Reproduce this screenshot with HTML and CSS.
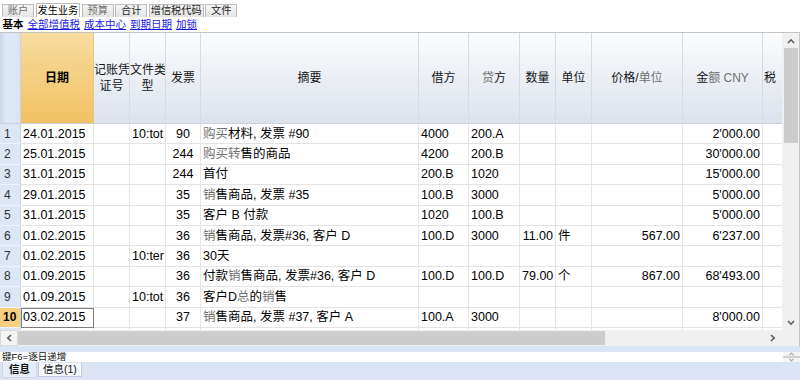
FILE: index.html
```html
<!DOCTYPE html>
<html lang="zh-CN">
<head>
    <meta charset="UTF-8">
    <title>发生业务</title>
    <link rel="stylesheet" href="styles.css">
</head>
<body>
    <div class="tabs">
        <span class="tab lt">账户</span>
        <span class="tab active">发生业务</span>
        <span class="tab lt">预算</span>
        <span class="tab">合计</span>
        <span class="tab">增信税代码</span>
        <span class="tab">文件</span>
    </div>
    <div class="views">
        <b>基本</b>
        <a href="#">全部增值税</a>
        <a href="#">成本中心</a>
        <a href="#">到期日期</a>
        <a href="#">加锁</a>
    </div>

    <div class="frame">
        <div class="grid-area">
            <div class="viewport">
                <table class="journal">
                    <colgroup>
                        <col class="w-rn"><col class="w-date"><col class="w-vch"><col class="w-type">
                        <col class="w-inv"><col class="w-desc"><col class="w-deb"><col class="w-cre">
                        <col class="w-qty"><col class="w-unit"><col class="w-price"><col class="w-amt">
                        <col class="w-tax">
                    </colgroup>
                    <thead>
                        <tr>
                            <th class="rn"></th>
                            <th class="date">日期</th>
                            <th class="lt">记账凭<br>证号</th>
                            <th>文件类<br>型</th>
                            <th class="lt">发票</th>
                            <th>摘要</th>
                            <th>借方</th>
                            <th><span class="lt">贷</span>方</th>
                            <th>数量</th>
                            <th class="lt">单位</th>
                            <th>价格/<span class="lt">单位</span></th>
                            <th>金<span class="lt">额 CNY</span></th>
                            <th class="tax">税</th>
                        </tr>
                    </thead>
                    <tbody>
                        <tr><td class="rn">1</td><td>24.01.2015</td><td></td><td>10:tot</td><td class="c">90</td><td><span class="lt">购买</span>材料, 发票 #90</td><td>4000</td><td>200.A</td><td></td><td></td><td></td><td class="r">2'000.00</td><td></td></tr>
                        <tr><td class="rn">2</td><td>25.01.2015</td><td></td><td></td><td class="c">244</td><td><span class="lt">购买转</span>售的商品</td><td>4200</td><td>200.B</td><td></td><td></td><td></td><td class="r">30'000.00</td><td></td></tr>
                        <tr><td class="rn">3</td><td>31.01.2015</td><td></td><td></td><td class="c">244</td><td>首付</td><td>200.B</td><td>1020</td><td></td><td></td><td></td><td class="r">15'000.00</td><td></td></tr>
                        <tr><td class="rn">4</td><td>29.01.2015</td><td></td><td></td><td class="c">35</td><td><span class="lt">销</span>售商品, 发票 #35</td><td>100.B</td><td>3000</td><td></td><td></td><td></td><td class="r">5'000.00</td><td></td></tr>
                        <tr><td class="rn">5</td><td>31.01.2015</td><td></td><td></td><td class="c">35</td><td>客户 B 付款</td><td>1020</td><td>100.B</td><td></td><td></td><td></td><td class="r">5'000.00</td><td></td></tr>
                        <tr><td class="rn">6</td><td>01.02.2015</td><td></td><td></td><td class="c">36</td><td><span class="lt">销</span>售商品, 发票#36, 客户 D</td><td>100.D</td><td>3000</td><td class="r">11.00</td><td>件</td><td class="r">567.00</td><td class="r">6'237.00</td><td></td></tr>
                        <tr><td class="rn">7</td><td>01.02.2015</td><td></td><td>10:ter</td><td class="c">36</td><td>30天</td><td></td><td></td><td></td><td></td><td></td><td></td><td></td></tr>
                        <tr><td class="rn">8</td><td>01.09.2015</td><td></td><td></td><td class="c">36</td><td>付款<span class="lt">销</span>售商品, 发票#36, 客户 D</td><td>100.D</td><td>100.D</td><td class="r">79.00</td><td>个</td><td class="r">867.00</td><td class="r">68'493.00</td><td></td></tr>
                        <tr><td class="rn">9</td><td>01.09.2015</td><td></td><td>10:tot</td><td class="c">36</td><td>客户D<span class="lt">总</span>的<span class="lt">销</span>售</td><td></td><td></td><td></td><td></td><td></td><td></td><td></td></tr>
                        <tr class="current"><td class="rn">10</td><td class="cur">03.02.2015</td><td></td><td></td><td class="c">37</td><td><span class="lt">销</span>售商品, 发票 #37, 客户 A</td><td>100.A</td><td>3000</td><td></td><td></td><td></td><td class="r">8'000.00</td><td></td></tr>
                        <tr><td class="rn"></td><td></td><td></td><td></td><td></td><td></td><td></td><td></td><td></td><td></td><td></td><td></td><td></td></tr>
                    </tbody>
                </table>
            </div>
            <div class="vscroll">
                <div class="arrow">
                    <svg width="8" height="6" viewBox="0 0 8 6"><polyline points="1,5 4,1.8 7,5" fill="none" stroke="#5a5a5a" stroke-width="1.6"/></svg>
                </div>
                <div class="thumb"></div>
                <div class="spacer"></div>
                <div class="arrow">
                    <svg width="8" height="6" viewBox="0 0 8 6"><polyline points="1,1 4,4.2 7,1" fill="none" stroke="#5a5a5a" stroke-width="1.6"/></svg>
                </div>
            </div>
        </div>
        <div class="hscroll">
            <div class="btn left">
                <svg width="6" height="8" viewBox="0 0 6 8"><polyline points="5,1 1.8,4 5,7" fill="none" stroke="#5a5a5a" stroke-width="1.6"/></svg>
            </div>
            <div class="thumb"></div>
            <div class="track"></div>
            <div class="btn">
                <svg width="6" height="8" viewBox="0 0 6 8"><polyline points="1,1 4.2,4 1,7" fill="none" stroke="#5a5a5a" stroke-width="1.6"/></svg>
            </div>
            <div class="corner"></div>
        </div>
    </div>

    <div class="bottom">
        <div class="status">
            <div class="msg">键F6=逐日递增</div>
            <div class="spin">
                <svg width="17" height="10" viewBox="0 0 17 10">
                    <polyline points="6.5,3 8.5,1.2 10.5,3" fill="none" stroke="#666" stroke-width="0.9"/>
                    <line x1="0" y1="5" x2="17" y2="5" stroke="#b0b0b0" stroke-width="1"/>
                    <polyline points="6.5,7 8.5,8.8 10.5,7" fill="none" stroke="#666" stroke-width="0.9"/>
                </svg>
            </div>
        </div>
        <div class="btabs">
            <span class="btab active">信息</span>
            <span class="btab">信息(1)</span>
        </div>
    </div>
</body>
</html>
```

FILE: styles.css
```css
* {
    box-sizing: border-box;
}
body {
    margin: 0;
    width: 800px;
    height: 380px;
    overflow: hidden;
    font-family: "Liberation Sans", "Noto Sans CJK SC", sans-serif;
    font-size: 12px;
    color: #000;
    background: #fff;
}
.lt {
    color: #707070;
}

/* top tabs */
.tabs {
    display: flex;
    align-items: flex-end;
    gap: 1.5px;
    height: 17px;
    padding-left: 2px;
}
.tab {
    min-width: 32px;
    height: 13px;
    padding: 0 1px;
    border: 1px solid #bcbcbc;
    border-bottom: none;
    background: linear-gradient(#f6f6f6, #e4e4e4);
    font-size: 10.2px;
    line-height: 12px;
    text-align: center;
    color: #222;
}
.tab.lt {
    color: #707070;
}
.tab.active {
    height: 14px;
    background: #fff;
    color: #000;
    line-height: 13px;
}

/* view links */
.views {
    display: flex;
    gap: 4px;
    height: 15px;
    padding-left: 2.5px;
    font-size: 10.5px;
    line-height: 15px;
}
.views a {
    color: #1a1ae6;
    text-decoration: underline;
}

/* grid frame */
.frame {
    border-top: 1px solid #c4c4c4;
    border-right: 1px solid #c4c4c4;
}
.grid-area {
    display: flex;
    height: 297px;
}
.viewport {
    width: 782px;
    overflow: hidden;
}

.journal {
    border-collapse: separate;
    border-spacing: 0;
    table-layout: fixed;
    width: 793px;
    font-size: 12.5px;
}
.w-rn { width: 21px; }
.w-date { width: 73px; }
.w-vch { width: 36px; }
.w-type { width: 36px; }
.w-inv { width: 35px; }
.w-desc { width: 218px; }
.w-deb { width: 50px; }
.w-cre { width: 51px; }
.w-qty { width: 36px; }
.w-unit { width: 36px; }
.w-price { width: 91px; }
.w-amt { width: 80px; }
.w-tax { width: 30px; }

.journal th {
    height: 91px;
    padding: 0;
    font-weight: normal;
    font-size: 12px;
    line-height: 16.5px;
    color: #151515;
    text-align: center;
    vertical-align: middle;
    white-space: nowrap;
    overflow: hidden;
    background: linear-gradient(#fbfcfd, #dce2ec);
    border-right: 1px solid #d5dbe4;
    border-bottom: 1px solid #cad1dc;
}
.journal th.rn {
    background: linear-gradient(to right, #c9d6ea, #dfe8f6 30%, #dae4f3);
    border-right: 1px solid #c8d3e4;
}
.journal th.date {
    font-weight: bold;
    color: #000;
    background: linear-gradient(#f8dc9f, #f1c163);
    border-right-color: #e9c57e;
}
.journal th.tax {
    text-align: left;
    padding-left: 1px;
    border-right: none;
}

.journal tbody tr {
    height: 20.4px;
}
.journal td {
    padding: 0 2px;
    line-height: 14px;
    white-space: nowrap;
    overflow: hidden;
    border-right: 1px solid #e4e6ea;
    border-bottom: 1px solid #e3e3e3;
}
.journal td.c {
    text-align: center;
}
.journal td.r {
    text-align: right;
}
.journal td.rn {
    padding-left: 4px;
    font-size: 12px;
    color: #333;
    background: #dde6f4;
    border-right: 1px solid #c8d3e4;
    border-bottom: 1px solid #eef2f9;
}
.current td.rn {
    padding-left: 3px;
    font-weight: bold;
    color: #000;
    background: #f6cf80;
}
.journal td.cur {
    outline: 1px solid #7d7d7d;
    outline-offset: -1px;
}

/* scrollbars */
.vscroll {
    display: flex;
    flex-direction: column;
    align-items: center;
    width: 17px;
    background: #f0f0f0;
}
.vscroll .arrow {
    display: flex;
    align-items: center;
    justify-content: center;
    width: 100%;
    height: 15px;
}
.vscroll .thumb {
    width: 14px;
    height: 95px;
    background: #cdcdcd;
}
.vscroll .spacer {
    flex: 1;
}
.hscroll {
    display: flex;
    height: 16px;
    background: #f0f0f0;
}
.hscroll .btn {
    display: flex;
    align-items: center;
    justify-content: center;
    width: 18px;
}
.hscroll .btn.left {
    background: #f5f5f5;
    border: 1px solid #dadada;
}
.hscroll .thumb {
    width: 587px;
    margin: 1px 0;
    background: #cdcdcd;
}
.hscroll .track {
    flex: 1;
}
.hscroll .corner {
    width: 17px;
}

/* bottom */
.bottom {
    height: 34px;
    padding-top: 6px;
    background: #dae4f5;
}
.status {
    display: flex;
    height: 10px;
    background: #fff;
}
.status .msg {
    flex: 1;
    overflow: hidden;
    padding-left: 2px;
    font-size: 9.5px;
    line-height: 10px;
    color: #111;
}
.status .spin {
    width: 17px;
    background: #f3f3f3;
}
.status .spin svg {
    display: block;
}
.btabs {
    display: flex;
    gap: 1px;
    padding-left: 2px;
}
.btab {
    height: 14px;
    margin-top: 1px;
    padding: 0 4px;
    border: 1px solid #c3ccd9;
    border-top: none;
    background: #f7f9fc;
    font-size: 10.5px;
    line-height: 13px;
    color: #111;
}
.btab.active {
    height: 16px;
    margin-top: 0;
    padding: 0 6px;
    background: #e6edf8;
    border-color: #cdd6e4;
    font-weight: bold;
    line-height: 15px;
}
```
